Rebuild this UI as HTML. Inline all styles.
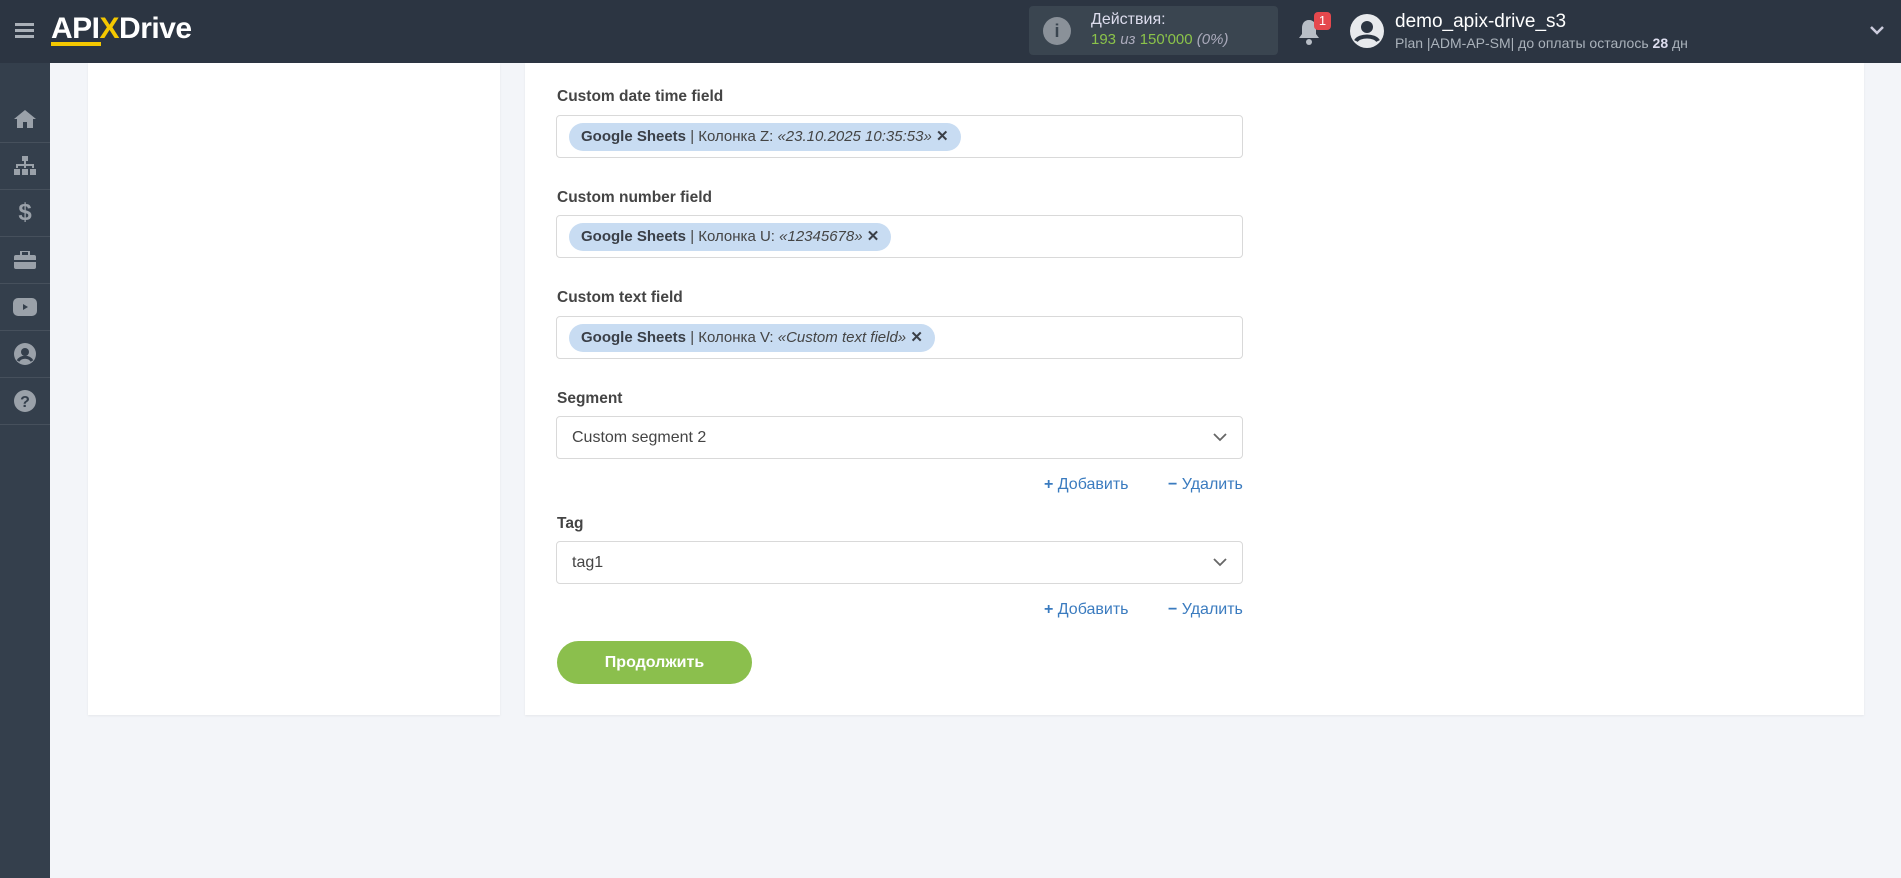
<!DOCTYPE html>
<html><head><meta charset="utf-8"><style>
*{box-sizing:border-box;margin:0;padding:0}
body{width:1901px;height:878px;overflow:hidden;background:#f3f5f9;font-family:"Liberation Sans",sans-serif;position:relative}
.hdr{position:absolute;left:0;top:0;width:1901px;height:63px;background:#2c3542}
.sb{position:absolute;left:0;top:63px;width:50px;height:815px;background:#343f4c}
.sbi{position:absolute;left:0;width:50px;height:47px;border-bottom:1px solid #46505c;display:flex;align-items:center;justify-content:center}
.card{position:absolute;background:#fff;top:63px;height:652px;box-shadow:0 1px 2px rgba(0,0,0,.06)}
.lbl{position:absolute;left:557px;font-size:15.5px;font-weight:bold;color:#444}
.box{position:absolute;left:556px;width:687px;height:43px;border:1px solid #d9d9d9;border-radius:4px;background:#fff}
.chip{position:absolute;left:12px;top:7px;height:28px;line-height:28px;padding:0 12px;background:#c8dcf2;border-radius:14px;font-size:15px;color:#444;white-space:nowrap}
.chip b{color:#3a3f47}
.sel{font-size:16px;color:#444;line-height:41px;padding-left:15px}
.chev{position:absolute;right:14px;top:13px}
.lnk{position:absolute;font-size:16px;color:#3a7bbf}
</style></head><body>
<div class="hdr">
 <div style="position:absolute;left:15px;top:23px;width:19px;height:3px;background:#aab0b8;box-shadow:0 6px 0 #aab0b8,0 12px 0 #aab0b8"></div>
 <div style="position:absolute;left:51px;top:12px;font-size:30px;font-weight:bold;color:#fff;letter-spacing:-0.5px">API<span style="color:#f5c800">X</span>Drive</div>
 <div style="position:absolute;left:51px;top:42px;width:50px;height:4px;background:#f5c800"></div>
 <div style="position:absolute;left:1029px;top:6px;width:249px;height:49px;background:#3a4550;border-radius:4px">
  <div style="position:absolute;left:14px;top:11px;width:28px;height:28px;border-radius:50%;background:#8a9199;color:#3a4550;font-weight:bold;font-size:18px;text-align:center;line-height:28px">i</div>
  <div style="position:absolute;left:62px;top:5px;font-size:16px;color:#dde">Действия:</div>
  <div style="position:absolute;left:62px;top:25px;font-size:15px;color:#8bc34a">193 <i style="color:#aab">из</i> 150'000 <i style="color:#aab">(0%)</i></div>
 </div>
 <svg style="position:absolute;left:1297px;top:18px" width="24" height="28" viewBox="0 0 24 28"><path d="M12 2c-5 0-7 4-7 8v6l-3 4h20l-3-4v-6c0-4-2-8-7-8z" fill="#b8bec6"/><circle cx="12" cy="24" r="3" fill="#b8bec6"/></svg>
 <div style="position:absolute;left:1314px;top:12px;width:17px;height:18px;background:#e5484d;border-radius:4px;color:#fff;font-size:13px;text-align:center;line-height:18px">1</div>
 <svg style="position:absolute;left:1350px;top:14px" width="34" height="34" viewBox="0 0 34 34"><circle cx="17" cy="17" r="17" fill="#e8eaed"/><circle cx="17" cy="13" r="6" fill="#2c3542"/><path d="M6 27c3-6 19-6 22 0" stroke="#2c3542" stroke-width="4" fill="none"/></svg>
 <div style="position:absolute;left:1395px;top:11px;font-size:19px;color:#fff">demo_apix-drive_s3</div>
 <div style="position:absolute;left:1395px;top:35px;font-size:14px;color:#aab2bb">Plan |ADM-AP-SM| до оплаты осталось <b style="color:#dde">28</b> дн</div>
 <svg style="position:absolute;left:1869px;top:25px" width="16" height="12"><path d="M2 2l6 6 6-6" stroke="#ccd" stroke-width="2.5" fill="none"/></svg>
</div>
<div class="sb">
 <div class="sbi" style="top:33px"><svg width="24" height="20" viewBox="0 0 24 20"><path d="M12 1L1 10h3v9h6v-6h4v6h6v-9h3z" fill="#9aa1a9"/></svg></div>
 <div class="sbi" style="top:80px"><svg width="24" height="20" viewBox="0 0 24 20"><rect x="9" y="0" width="6" height="5" fill="#9aa1a9"/><path d="M12 5v4M4 12V9h16v3M12 9v3" stroke="#9aa1a9" stroke-width="2" fill="none"/><rect x="1" y="13" width="6" height="6" fill="#9aa1a9"/><rect x="9" y="13" width="6" height="6" fill="#9aa1a9"/><rect x="17" y="13" width="6" height="6" fill="#9aa1a9"/></svg></div>
 <div class="sbi" style="top:127px;color:#9aa1a9;font-weight:bold;font-size:24px">$</div>
 <div class="sbi" style="top:174px"><svg width="22" height="18"><rect x="0" y="4" width="22" height="14" rx="2" fill="#9aa1a9"/><rect x="7" y="0" width="8" height="5" fill="none" stroke="#9aa1a9" stroke-width="2"/><rect x="0" y="9" width="22" height="2" fill="#343f4c"/></svg></div>
 <div class="sbi" style="top:221px"><svg width="24" height="18"><rect width="24" height="18" rx="5" fill="#9aa1a9"/><path d="M10 6l5 3-5 3z" fill="#343f4c"/></svg></div>
 <div class="sbi" style="top:268px"><svg width="22" height="22"><circle cx="11" cy="11" r="11" fill="#9aa1a9"/><circle cx="11" cy="9" r="4" fill="#343f4c"/><path d="M4 18c3-5 11-5 14 0" stroke="#343f4c" stroke-width="3" fill="none"/></svg></div>
 <div class="sbi" style="top:315px"><svg width="22" height="22"><circle cx="11" cy="11" r="11" fill="#9aa1a9"/><text x="11" y="17" text-anchor="middle" font-family="Liberation Sans" font-weight="bold" font-size="16" fill="#343f4c">?</text></svg></div>
</div>
<div class="card" style="left:88px;width:412px"></div>
<div class="card" style="left:525px;width:1339px"></div>

<div class="lbl" style="top:88px">Custom date time field</div>
<div class="box" style="top:115px"><div class="chip"><b>Google Sheets</b> | Колонка Z: <i>«23.10.2025 10:35:53»</i> <b>✕</b></div></div>
<div class="lbl" style="top:189px">Custom number field</div>
<div class="box" style="top:215px"><div class="chip"><b>Google Sheets</b> | Колонка U: <i>«12345678»</i> <b>✕</b></div></div>
<div class="lbl" style="top:289px">Custom text field</div>
<div class="box" style="top:316px"><div class="chip"><b>Google Sheets</b> | Колонка V: <i>«Custom text field»</i> <b>✕</b></div></div>
<div class="lbl" style="top:390px">Segment</div>
<div class="box" style="top:416px"><div class="sel">Custom segment 2</div><svg class="chev" width="16" height="14"><path d="M2 4l6 6 6-6" stroke="#666" stroke-width="1.8" fill="none"/></svg></div>
<div class="lnk" style="left:1044px;top:476px"><b>+</b> Добавить</div>
<div class="lnk" style="left:1168px;top:476px"><b>−</b> Удалить</div>
<div class="lbl" style="top:515px">Tag</div>
<div class="box" style="top:541px"><div class="sel">tag1</div><svg class="chev" width="16" height="14"><path d="M2 4l6 6 6-6" stroke="#666" stroke-width="1.8" fill="none"/></svg></div>
<div class="lnk" style="left:1044px;top:601px"><b>+</b> Добавить</div>
<div class="lnk" style="left:1168px;top:601px"><b>−</b> Удалить</div>
<div style="position:absolute;left:557px;top:641px;width:195px;height:43px;border-radius:22px;background:#8bbf4d;color:#fff;font-size:16px;font-weight:bold;text-align:center;line-height:43px">Продолжить</div>
</body></html>
